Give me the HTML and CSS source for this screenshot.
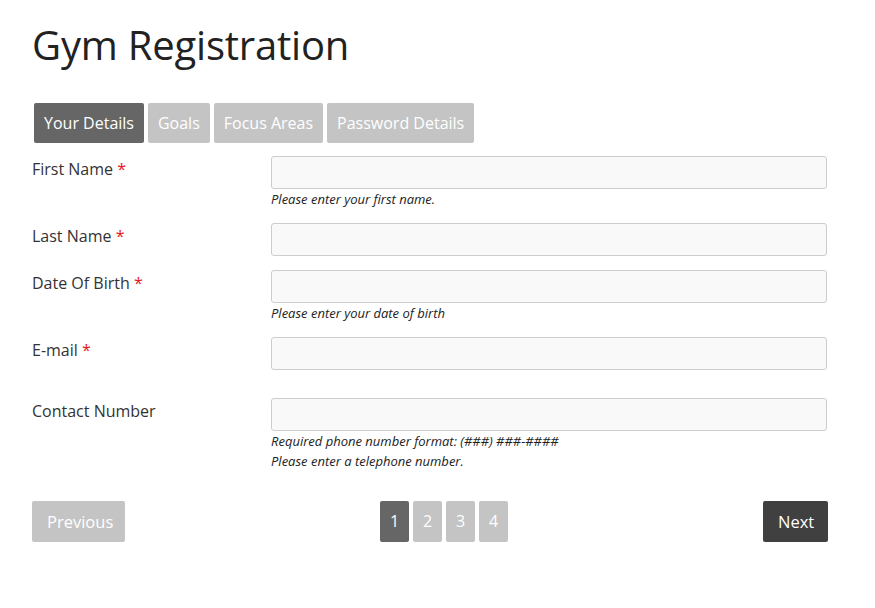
FILE: index.html
```html
<!DOCTYPE html>
<html lang="en">
<head>
  <meta charset="UTF-8">
  <meta name="viewport" content="width=device-width, initial-scale=1.0">
  <title>Gym Registration</title>
  <link rel="stylesheet" href="styles.css">
</head>
<body>
  <div class="wizard">
    <h1>Gym Registration</h1>
    <div class="tabs">
      <span class="tab active">Your Details</span>
      <span class="tab">Goals</span>
      <span class="tab">Focus Areas</span>
      <span class="tab">Password Details</span>
    </div>
    <form class="form">
      <div class="row">
        <label>First Name <span class="req">*</span></label>
        <div class="field">
          <input type="text">
          <div class="help">Please enter your first name.</div>
        </div>
      </div>
      <div class="row">
        <label>Last Name <span class="req">*</span></label>
        <div class="field">
          <input type="text">
        </div>
      </div>
      <div class="row">
        <label>Date Of Birth <span class="req">*</span></label>
        <div class="field">
          <input type="text">
          <div class="help">Please enter your date of birth</div>
        </div>
      </div>
      <div class="row">
        <label>E-mail <span class="req">*</span></label>
        <div class="field">
          <input type="text">
          <div class="help empty"></div>
        </div>
      </div>
      <div class="row">
        <label>Contact Number</label>
        <div class="field">
          <input type="text">
          <div class="help">Required phone number format: (###) ###-####</div>
          <div class="help">Please enter a telephone number.</div>
        </div>
      </div>
    </form>
    <div class="nav">
      <button class="btn light">Previous</button>
      <div class="pages">
        <span class="page active">1</span>
        <span class="page">2</span>
        <span class="page">3</span>
        <span class="page">4</span>
      </div>
      <button class="btn dark">Next</button>
    </div>
  </div>
</body>
</html>
```

FILE: styles.css
```css
body {
  font-family: 'Open Sans', 'Noto Sans', Arial, sans-serif;
  color: #333;
  background: #fff;
  margin: 0;
}
.wizard {
  width: 796px;
  padding: 0 32px;
}
h1 {
  font-size: 40px;
  font-weight: 400;
  color: #222;
  margin: 0;
  padding-top: 20px;
  line-height: 50px;
  letter-spacing: -0.2px;
}
.tabs {
  display: flex;
  margin-top: 33px;
  padding-left: 2px;
}
.tab {
  height: 40px;
  line-height: 40px;
  padding: 0 10px;
  margin-right: 4px;
  font-size: 16px;
  color: #fff;
  background: #c4c4c4;
  border-radius: 2px;
}
.tab.active {
  background: #666;
}
.form {
  margin-top: 13px;
}
.row {
  display: flex;
  margin-bottom: 14px;
}
.row label {
  width: 239px;
  font-size: 16px;
  line-height: 24px;
  padding-top: 1px;
}
.req {
  color: #e4141b;
}
.field {
  width: 556px;
}
.field input {
  display: block;
  width: 100%;
  height: 33px;
  box-sizing: border-box;
  background: #f9f9f9;
  border: 1px solid #ccc;
  border-radius: 3px;
  margin: 0;
}
.help {
  font-size: 13px;
  font-style: italic;
  line-height: 20px;
  color: #222;
}
.help.empty {
  height: 14px;
}
.nav {
  display: flex;
  justify-content: space-between;
  margin-top: 30px;
}
.btn {
  height: 41px;
  padding: 0 15px;
  border: none;
  border-radius: 2px;
  font-family: inherit;
  font-size: 16.5px;
  color: #fff;
}
.btn.light {
  background: #c4c4c4;
  width: 93px;
}
.btn.dark {
  background: #404040;
  width: 65px;
}
.pages {
  display: flex;
  gap: 4px;
}
.page {
  width: 29px;
  height: 41px;
  line-height: 41px;
  text-align: center;
  font-size: 16px;
  color: #fff;
  background: #c4c4c4;
  border-radius: 2px;
}
.page.active {
  background: #666;
}
```
